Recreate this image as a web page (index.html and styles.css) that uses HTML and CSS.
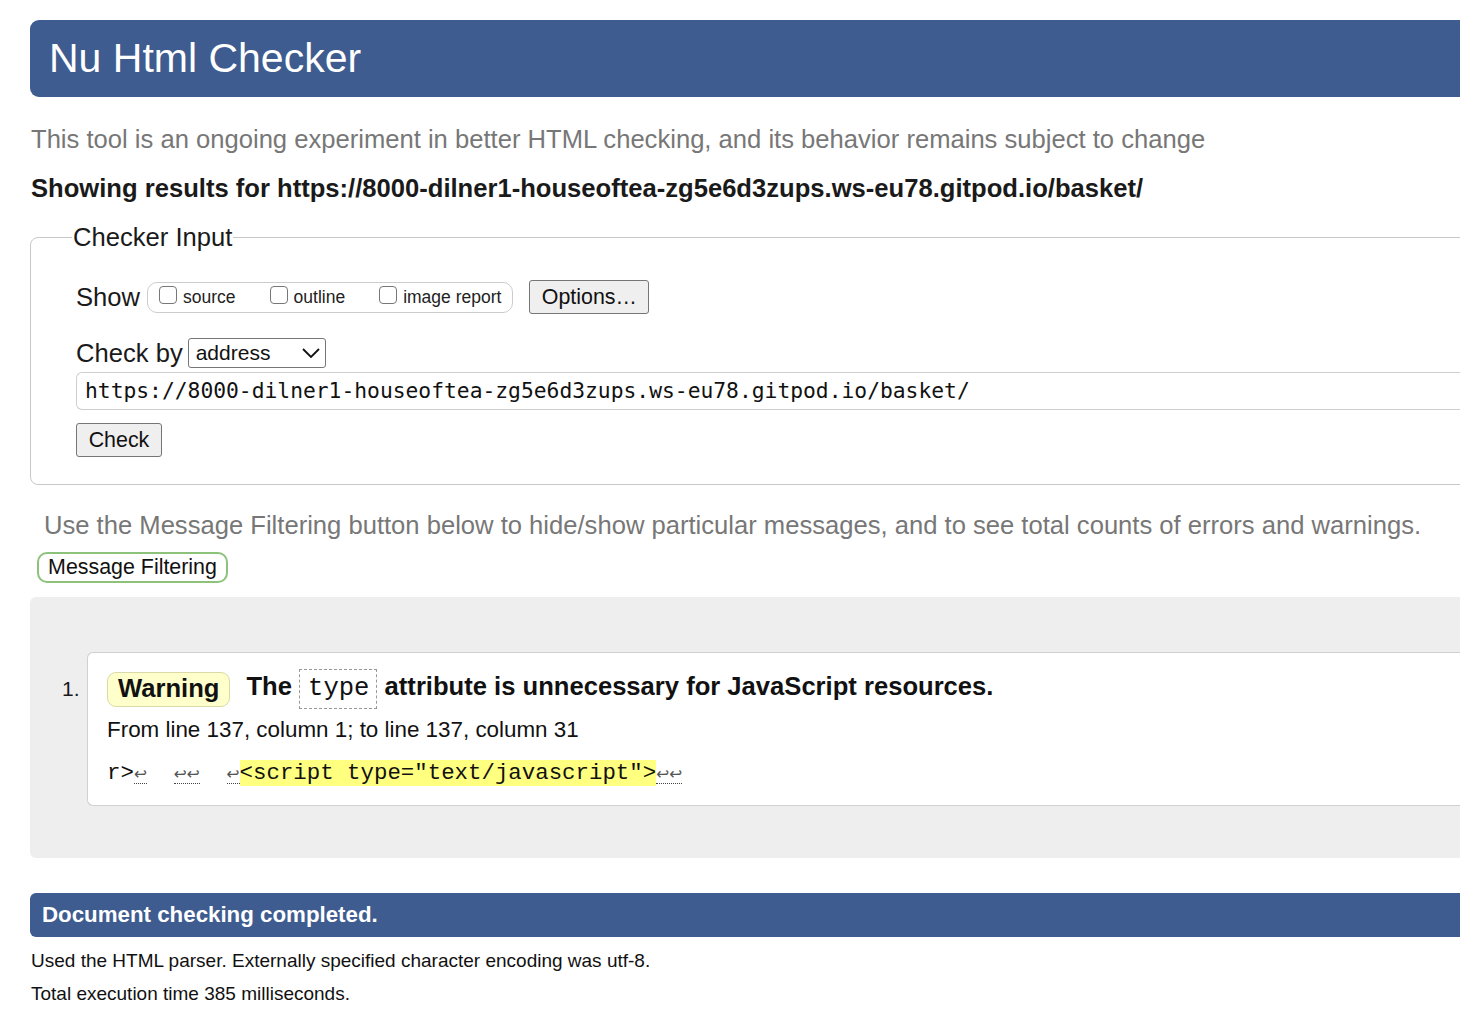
FILE: index.html
```html
<!DOCTYPE html>
<html lang="en">
<head>
<meta charset="utf-8">
<title>Nu Html Checker</title>
<link rel="stylesheet" href="styles.css">
</head>
<body>
<div class="page">
  <h1 class="title">Nu Html Checker</h1>
  <p class="intro">This tool is an ongoing experiment in better HTML checking, and its behavior remains subject to change</p>
  <p class="showing">Showing results for https://8000-dilner1-houseoftea-zg5e6d3zups.ws-eu78.gitpod.io/basket/</p>

  <fieldset class="input">
    <legend>Checker Input</legend>
    <div class="show-row">
      <span class="lbl">Show</span>
      <span class="checks">
        <label><input type="checkbox" class="cb"> source</label>
        <label><input type="checkbox" class="cb"> outline</label>
        <label><input type="checkbox" class="cb"> image report</label>
      </span>
      <button class="btn options">Options…</button>
    </div>
    <div class="by-row">
      <span class="lbl">Check by</span>
      <span class="select">address
        <svg class="chev" width="20" height="12" viewBox="0 0 20 12"><path d="M2 2 L10 10 L18 2" fill="none" stroke="#111" stroke-width="1.8"/></svg>
      </span>
    </div>
    <div class="url">https://8000-dilner1-houseoftea-zg5e6d3zups.ws-eu78.gitpod.io/basket/</div>
    <button class="btn check">Check</button>
  </fieldset>

  <p class="filter-note">Use the Message Filtering button below to hide/show particular messages, and to see total counts of errors and warnings.</p>
  <button class="filter-btn">Message Filtering</button>

  <div class="results">
    <ol class="msgs">
      <li class="msg">
        <span class="num">1.</span>
        <p class="msg-head"><strong class="badge">Warning</strong> <span class="msg-text">The <code class="attr">type</code> attribute is unnecessary for JavaScript resources.</span></p>
        <p class="loc">From line 137, column 1; to line 137, column 31</p>
        <p class="extract"><code>r&gt;<b class="lf">↩</b>  <b class="lf">↩↩</b>  <b class="lf">↩</b><mark class="hl">&lt;script type="text/javascript"&gt;</mark><b class="lf">↩↩</b></code></p>
      </li>
    </ol>
  </div>

  <h2 class="done">Document checking completed.</h2>
  <p class="stat">Used the HTML parser. Externally specified character encoding was utf-8.</p>
  <p class="stat">Total execution time 385 milliseconds.</p>
</div>
</body>
</html>
```

FILE: styles.css
```css
html, body {
  margin: 0;
  padding: 0;
  background: #fff;
  overflow: hidden;
}
body {
  font-family: "Liberation Sans", Arial, sans-serif;
  color: #1a1a1a;
}
.page {
  width: 1520px;
  padding: 20px 0 0 30px;
}
.title {
  margin: 0;
  height: 77px;
  box-sizing: border-box;
  padding: 14px 0 0 19px;
  background: #3e5c8f;
  color: #fff;
  font-weight: normal;
  font-size: 41px;
  line-height: 48px;
  border-radius: 9px 0 0 9px;
}
.intro {
  margin: 27px 0 0 1px;
  font-size: 25.6px;
  line-height: 30px;
  color: #777;
}
.showing {
  margin: 19px 0 0 1px;
  font-size: 25.6px;
  line-height: 30px;
  font-weight: bold;
  color: #1a1a1a;
}
.input {
  margin: 19px 0 0 0;
  border: 1px solid #c8c8c8;
  border-radius: 8px;
  padding: 16px 0 27px 45px;
  min-width: 0;
}
.input legend {
  font-size: 25.6px;
  line-height: 30px;
  padding: 0 1px;
  margin-left: -4px;
  color: #1a1a1a;
}
.show-row {
  display: flex;
  align-items: center;
  margin-top: 12px;
}
.lbl {
  font-size: 25.6px;
  line-height: 30px;
  color: #1a1a1a;
}
.checks {
  display: flex;
  align-items: center;
  gap: 34px;
  margin-left: 7px;
  height: 31px;
  box-sizing: border-box;
  border: 1px solid #ccc;
  border-radius: 10px;
  padding: 0 11px 0 11px;
  font-size: 17.5px;
}
.checks label {
  display: flex;
  align-items: center;
  gap: 6px;
  color: #222;
}
.cb {
  appearance: none;
  -webkit-appearance: none;
  margin: 0;
  width: 18px;
  height: 18px;
  border: 1px solid #777;
  border-radius: 4px;
  background: #fff;
  position: relative;
  top: -2px;
}
.btn {
  font-family: "Liberation Sans", Arial, sans-serif;
  font-size: 21.4px;
  color: #111;
  background: #efefef;
  border: 1px solid #767676;
  border-radius: 3px;
  box-sizing: border-box;
  padding: 0 6px;
}
.options {
  margin-left: 16px;
  height: 34px;
  width: 120px;
}
.by-row {
  display: flex;
  align-items: center;
  margin-top: 24px;
}
.select {
  display: flex;
  align-items: center;
  justify-content: space-between;
  margin-left: 5px;
  width: 138px;
  height: 30px;
  box-sizing: border-box;
  border: 1px solid #767676;
  border-radius: 3px;
  padding: 0 4px 0 7px;
  font-size: 21px;
  color: #111;
}
.url {
  margin-top: 4px;
  height: 38px;
  box-sizing: border-box;
  border: 1px solid #cfcfcf;
  border-right: none;
  border-radius: 6px 0 0 6px;
  padding: 6px 0 0 8px;
  font-family: "DejaVu Sans Mono", monospace;
  font-size: 21.3px;
  line-height: 24px;
  color: #111;
  white-space: nowrap;
}
.check {
  margin-top: 13px;
  height: 34px;
  width: 86px;
  display: block;
}
.filter-note {
  margin: 25px 0 0 14px;
  font-size: 25.6px;
  line-height: 30px;
  color: #777;
}
.filter-btn {
  display: block;
  margin: 12px 0 0 7px;
  width: 191px;
  height: 31px;
  box-sizing: border-box;
  background: #fff;
  border: 2px solid #8dc27a;
  border-radius: 10px;
  font-family: "Liberation Sans", Arial, sans-serif;
  font-size: 21.4px;
  color: #111;
  padding: 0;
}
.results {
  margin-top: 14px;
  background: #eeeeee;
  border-radius: 6px 0 0 6px;
  padding: 55px 0 52px 57px;
}
.msgs {
  list-style: none;
  margin: 0;
  padding: 0;
}
.msg {
  position: relative;
  background: #fff;
  border: 1px solid #d0d0d0;
  border-right: none;
  border-radius: 6px 0 0 6px;
  padding: 16px 0 18px 19px;
}
.num {
  position: absolute;
  left: -26px;
  top: 24px;
  font-size: 21px;
  line-height: 24px;
  color: #1a1a1a;
}
.msg-head {
  margin: 0;
  display: flex;
  align-items: center;
  font-size: 25.6px;
  font-weight: bold;
  color: #111;
}
.badge {
  display: inline-block;
  background: #ffffcc;
  border: 1px solid #dadaa8;
  border-radius: 9px;
  padding: 0 10px;
  height: 35px;
  line-height: 31px;
  box-sizing: border-box;
  margin-right: 16px;
}
.msg-text {
  white-space: nowrap;
}
.attr {
  display: inline-block;
  font-family: "Liberation Mono", "Courier New", monospace;
  font-weight: normal;
  font-size: 25.6px;
  border: 1px dashed #999;
  padding: 6px 7px 6px 8px;
  margin: 0 0 0 0;
  line-height: 26px;
}
.loc {
  margin: 8px 0 0 0;
  font-size: 22.4px;
  line-height: 26px;
  color: #111;
}
.extract {
  margin: 16px 0 0 0;
  font-size: 22.4px;
  line-height: 26px;
  white-space: pre;
}
.extract code {
  font-family: "Liberation Mono", "Courier New", monospace;
  color: #111;
}
.lf {
  font-weight: normal;
  color: #555;
  font-size: 15.5px;
  border-bottom: 1px dotted #444;
  font-family: "DejaVu Sans", sans-serif;
}
.hl {
  background: #ffff80;
  color: #111;
}
.done {
  margin: 35px 0 0 0;
  height: 44px;
  box-sizing: border-box;
  padding: 9px 0 0 12px;
  background: #3e5c8f;
  color: #fff;
  font-size: 22.3px;
  line-height: 26px;
  border-radius: 6px 0 0 6px;
}
.stat {
  margin: 12px 0 0 1px;
  font-size: 19px;
  line-height: 24px;
  color: #111;
}
.stat + .stat {
  margin-top: 9px;
}
```
